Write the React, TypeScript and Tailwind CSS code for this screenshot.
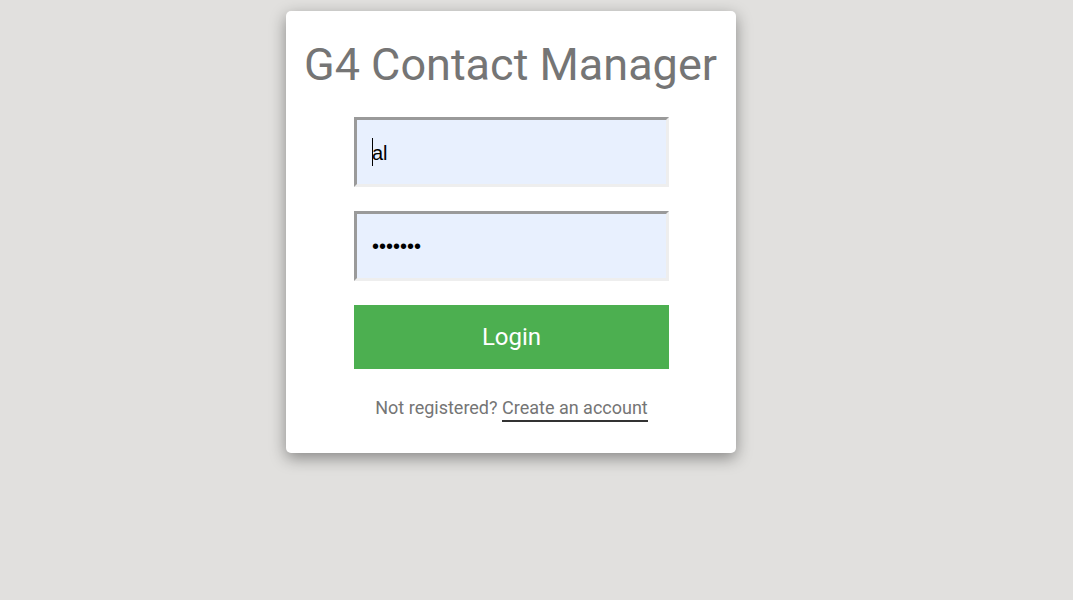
import React, { useState } from 'react';

const LoginPage: React.FC = () => {
  const [username, setUsername] = useState('al');
  const [password, setPassword] = useState('1234567');

  return (
    <div
      className="min-h-[600px] w-full bg-[#e1e0de] flex justify-center items-start pt-[11px] pr-[52px]"
      style={{ fontFamily: 'Roboto, "Noto Sans", sans-serif' }}
    >
      <div className="w-[450px] bg-white rounded-[5px] shadow-[0_5px_16px_rgba(0,0,0,0.4)] flex flex-col items-center pt-[28px] pb-[33px]">
        <h1 className="text-[45px] leading-[52px] text-[#757575] font-normal">G4 Contact Manager</h1>

        <form
          className="flex flex-col items-center gap-6 mt-[26px] pl-[2px]"
          onSubmit={(e) => e.preventDefault()}
        >
          <div className="relative">
            <input
              type="text"
              value={username}
              onChange={(e) => setUsername(e.target.value)}
              className="w-[315px] h-[70px] bg-[#e8f0fe] border-[3px] border-t-[#9a9a9a] border-l-[#9a9a9a] border-b-[#eeeeee] border-r-[#eeeeee] pl-[15px] pt-[2px] text-[20px] text-black outline-none caret-black"
              style={{ fontFamily: '"Liberation Sans", Arial, sans-serif' }}
            />
            <span className="absolute left-[18px] top-[21px] w-px h-[28px] bg-black" />
          </div>
          <input
            type="password"
            value={password}
            onChange={(e) => setPassword(e.target.value)}
            className="w-[315px] h-[70px] bg-[#e8f0fe] border-[3px] border-t-[#9a9a9a] border-l-[#9a9a9a] border-b-[#eeeeee] border-r-[#eeeeee] pl-[15px] text-[20px] text-black outline-none"
            style={{ fontFamily: '"Liberation Sans", Arial, sans-serif' }}
          />
          <button
            type="submit"
            className="w-[315px] h-[64px] bg-[#4caf50] text-white text-[24px]"
          >
            Login
          </button>
        </form>

        <p className="mt-[26px] text-[18px] text-[#757575] leading-[25px] pl-[2px]">
          Not registered?{' '}
          <a href="#" className="text-[#757575] border-b-2 border-[#333] pb-[2px]">
            Create an account
          </a>
        </p>
      </div>
    </div>
  );
};

export default LoginPage;
